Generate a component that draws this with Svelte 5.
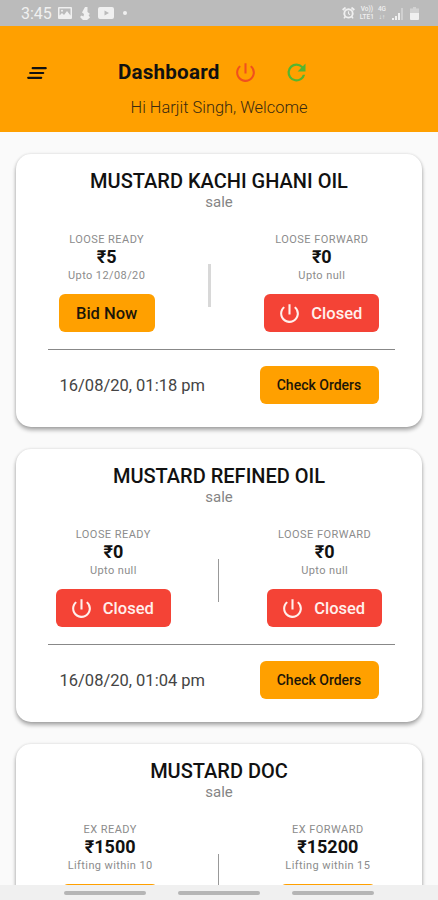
<script>
  const cards = [
    {
      name: 'MUSTARD KACHI GHANI OIL',
      date: '16/08/20, 01:18 pm',
      softDivider: true,
      rates: [
        { label: 'LOOSE READY', price: 5, note: 'Upto 12/08/20', open: true },
        { label: 'LOOSE FORWARD', price: 0, note: 'Upto null', open: false },
      ],
    },
    {
      name: 'MUSTARD REFINED OIL',
      date: '16/08/20, 01:04 pm',
      rates: [
        { label: 'LOOSE READY', price: 0, note: 'Upto null', open: false },
        { label: 'LOOSE FORWARD', price: 0, note: 'Upto null', open: false },
      ],
    },
    {
      name: 'MUSTARD DOC',
      rates: [
        { label: 'EX READY', price: 1500, note: 'Lifting within 10', open: true },
        { label: 'EX FORWARD', price: 15200, note: 'Lifting within 15', open: true },
      ],
    },
  ]
</script>

{#snippet power()}
  <svg class="power" viewBox="0 0 24 24" aria-hidden="true">
    <path d="M13 3h-2v10h2V3zm4.83 2.17-1.42 1.42A6.92 6.92 0 0 1 19 12a7 7 0 1 1-11.42-5.42L6.17 5.17A8.93 8.93 0 0 0 3 12a9 9 0 1 0 14.83-6.83z" />
  </svg>
{/snippet}

{#snippet rate(r, hasFoot)}
  <div class="rate">
    <span class="label">{r.label}</span>
    <span class="price">₹{r.price}</span>
    <span class="note">{r.note}</span>
    {#if r.open}
      <button class="bid" aria-label="Bid Now">{hasFoot ? 'Bid Now' : ''}</button>
    {:else}
      <button class="closed">{@render power()}Closed</button>
    {/if}
  </div>
{/snippet}

<div class="screen">
  <div class="status">
    <span class="clock">3:45</span>
    <svg class="image" viewBox="0 0 14 12" aria-hidden="true">
      <path fill-rule="evenodd" d="M1 0h12a1 1 0 0 1 1 1v10a1 1 0 0 1-1 1H1a1 1 0 0 1-1-1V1a1 1 0 0 1 1-1zm.5 1.5v7L4 6l2 2 3-4 3.500 4.500v-7z" />
      <circle cx="4" cy="3.700" r="1" />
    </svg>
    <svg class="touch" viewBox="0 0 11 13" aria-hidden="true">
      <path d="M5 0h2.500v5L10 7 8.500 8 10 10.500 7 13H3L0 10l1.500-1.500 2 1L4 7 2 5.500z" />
    </svg>
    <svg class="video" viewBox="0 0 16 12" aria-hidden="true">
      <path fill-rule="evenodd" d="M2 0h12a2 2 0 0 1 2 2v8a2 2 0 0 1-2 2H2a2 2 0 0 1-2-2V2a2 2 0 0 1 2-2zm4.500 3.500v5L11 6z" />
    </svg>
    <i class="dot"></i>
    <svg class="alarm" viewBox="0 0 14 14" aria-hidden="true">
      <path d="M0 3 3 .5l1.500 1.200L1.500 4.500zM14 3 11 .5 9.500 1.700l3 2.800z" />
      <path fill-rule="evenodd" d="M7 2a5.500 5.500 0 0 1 4.500 8.700l1 1.800-1.200.8-1.200-1.400a5.500 5.500 0 0 1-6.200 0l-1.200 1.400-1.200-.8 1-1.800A5.500 5.500 0 0 1 7 2zm0 2a3.500 3.500 0 1 0 0 7 3.500 3.500 0 0 0 0-7z" />
      <path d="M6.400 5h1.200v2.300L9 8.700l-.8.8-1.800-1.700z" />
    </svg>
    <span class="net"><span>Vo))</span><span>LTE1</span></span>
    <span class="net"><span>4G</span><span>↓↑</span></span>
    <svg class="signal" viewBox="0 0 11 12" aria-hidden="true">
      <path d="M0 10h2v2H0zM3 8h2v4H3zM6 5h2v7H6z" />
      <path opacity="0.4" d="M9 0h2v12H9z" />
    </svg>
    <svg class="battery" viewBox="0 0 9 13" aria-hidden="true">
      <path opacity="0.45" d="M3 0h3v1.500h3V7H0V1.500h3z" />
      <path d="M0 6h9v6a1 1 0 0 1-1 1H1a1 1 0 0 1-1-1z" />
    </svg>
  </div>

  <header>
    <svg class="menu" viewBox="0 0 20 12" aria-hidden="true">
      <path d="M5.700 1.200h13M3.200 6h13M1.200 10.800h13" />
    </svg>
    <h1>Dashboard</h1>
    <span class="logout">{@render power()}</span>
    <svg class="refresh" viewBox="0 0 24 24" aria-hidden="true">
      <path d="M17.650 6.350A7.960 7.960 0 0 0 12 4a8 8 0 1 0 7.730 10h-2.080A6 6 0 1 1 12 6c1.660 0 3.140.690 4.220 1.780L13 11h7V4l-2.350 2.350z" />
    </svg>
    <p>Hi Harjit Singh, Welcome</p>
  </header>

  <main>
    {#each cards as card}
      <section class="card">
        <h2>{card.name}</h2>
        <span class="kind">sale</span>
        <div class="rates">
          {@render rate(card.rates[0], card.date)}
          <i class="divider" class:soft={card.softDivider}></i>
          {@render rate(card.rates[1], card.date)}
        </div>
        {#if card.date}
          <div class="foot">
            <span class="date">{card.date}</span>
            <button class="orders">Check Orders</button>
          </div>
        {/if}
      </section>
    {/each}
  </main>

  <nav>
    <i></i>
    <i></i>
    <i></i>
  </nav>
</div>

<style>
  :global(body) {
    margin: 0;
  }
  .screen {
    display: flex;
    flex-direction: column;
    height: 900px;
    overflow: hidden;
    background: #fafafa;
    font-family: Roboto, sans-serif;
    color: #111;
  }
  svg {
    display: block;
    flex: none;
    fill: currentColor;
  }

  .status {
    display: flex;
    flex: none;
    align-items: center;
    box-sizing: border-box;
    height: 26px;
    padding: 0 19px 0 21px;
    background: #bbb;
    color: #f0f0f0;
  }
  .clock {
    width: 37px;
    padding-top: 1px;
    font-size: 16px;
    line-height: 26px;
  }
  .image {
    width: 14px;
    height: 12px;
  }
  .touch {
    width: 11px;
    height: 13px;
    margin-left: 8px;
  }
  .video {
    width: 16px;
    height: 12px;
    margin-left: 7px;
  }
  .dot {
    width: 4px;
    height: 4px;
    margin: 0 auto 0 9px;
    border-radius: 50%;
    background: currentColor;
  }
  .alarm {
    width: 13px;
    height: 14px;
    margin-right: 5px;
  }
  .net {
    display: flex;
    flex-direction: column;
    align-items: center;
    margin-right: 4px;
    font-size: 6.5px;
    font-weight: 500;
    line-height: 8px;
  }
  .signal {
    width: 11px;
    height: 12px;
    margin: 2px 7px 0 2px;
  }
  .battery {
    width: 9px;
    height: 13px;
  }

  header {
    display: grid;
    flex: none;
    grid-template-columns: 91px 102px 24px 24px 1fr;
    grid-template-rows: 24px 20px;
    row-gap: 14px;
    align-items: center;
    box-sizing: border-box;
    height: 106px;
    padding: 34px 0 0 27px;
    background: #ffa000;
  }
  .menu {
    width: 20px;
    height: 12px;
    margin-top: 2px;
    fill: none;
    stroke: #111;
    stroke-width: 2.2;
    stroke-linecap: round;
  }
  h1 {
    margin: 0;
    font-size: 20.6px;
    font-weight: 700;
    line-height: 24px;
    letter-spacing: 0.2px;
  }
  .logout {
    margin-left: 13px;
    color: #f0501e;
  }
  .power {
    width: 25px;
    height: 25px;
  }
  .refresh {
    width: 27px;
    height: 27px;
    margin-left: 39px;
    color: #55b530;
  }
  header p {
    grid-column: 1 / -1;
    margin: 0 0 0 -27px;
    font-size: 16.4px;
    font-weight: 300;
    line-height: 20px;
    text-align: center;
    color: #3a2a10;
  }

  main {
    display: flex;
    flex: 1;
    flex-direction: column;
    gap: 22px;
    min-height: 0;
    padding: 22px 16px 0;
    overflow: hidden;
  }
  .card {
    display: flex;
    flex: none;
    flex-direction: column;
    align-items: center;
    box-sizing: border-box;
    height: 273px;
    padding: 15px 16px 0;
    border-radius: 15px;
    background: #fff;
    box-shadow: 0 3px 4px rgba(0, 0, 0, 0.33), 0 0 3px rgba(0, 0, 0, 0.12);
  }
  h2 {
    margin: 0;
    font-size: 20px;
    font-weight: 500;
    line-height: 24px;
  }
  .kind {
    font-size: 15px;
    line-height: 18px;
    color: #858585;
  }
  .rates {
    display: flex;
    align-items: center;
    justify-content: space-around;
    width: 100%;
    margin-top: 22px;
  }
  .rate {
    display: flex;
    flex-direction: column;
    align-items: center;
    color: #8c8c8c;
  }
  .label {
    font-size: 11px;
    line-height: 14px;
    letter-spacing: 0.45px;
  }
  .price {
    margin-top: -1px;
    font-size: 18px;
    font-weight: 700;
    line-height: 21px;
    color: #111;
  }
  .note {
    margin-top: 1px;
    font-size: 11px;
    line-height: 16px;
    letter-spacing: 0.4px;
  }
  .divider {
    width: 1px;
    height: 43px;
    margin-top: 5px;
    background: #999;
  }
  .divider.soft {
    width: 3px;
    background: #d8d8d8;
  }
  button {
    display: flex;
    align-items: center;
    justify-content: center;
    height: 38px;
    padding: 0;
    border: none;
    border-radius: 6px;
    background: #ffa000;
    color: #1c1608;
    font: 500 16.5px Roboto, sans-serif;
  }
  .bid,
  .closed {
    width: 96px;
    margin-top: 10px;
  }
  .closed {
    gap: 9px;
    box-sizing: border-box;
    width: 115px;
    padding-right: 4px;
    background: #f44336;
    color: #fff0ec;
  }
  .foot {
    display: flex;
    align-items: center;
    justify-content: space-between;
    box-sizing: border-box;
    width: 347px;
    margin: 17px 0 0 4px;
    padding: 16px 16px 0 12px;
    border-top: 1px solid #888;
  }
  .date {
    font-size: 16.5px;
    color: #444;
  }
  .orders {
    width: 119px;
    font-size: 14px;
  }

  nav {
    display: flex;
    flex: none;
    gap: 32px;
    align-items: center;
    justify-content: center;
    height: 15px;
    background: #f0f0f0;
  }
  nav i {
    width: 82px;
    height: 4px;
    margin-top: 1px;
    border-radius: 2px;
    background: #b5b5b5;
  }
</style>
